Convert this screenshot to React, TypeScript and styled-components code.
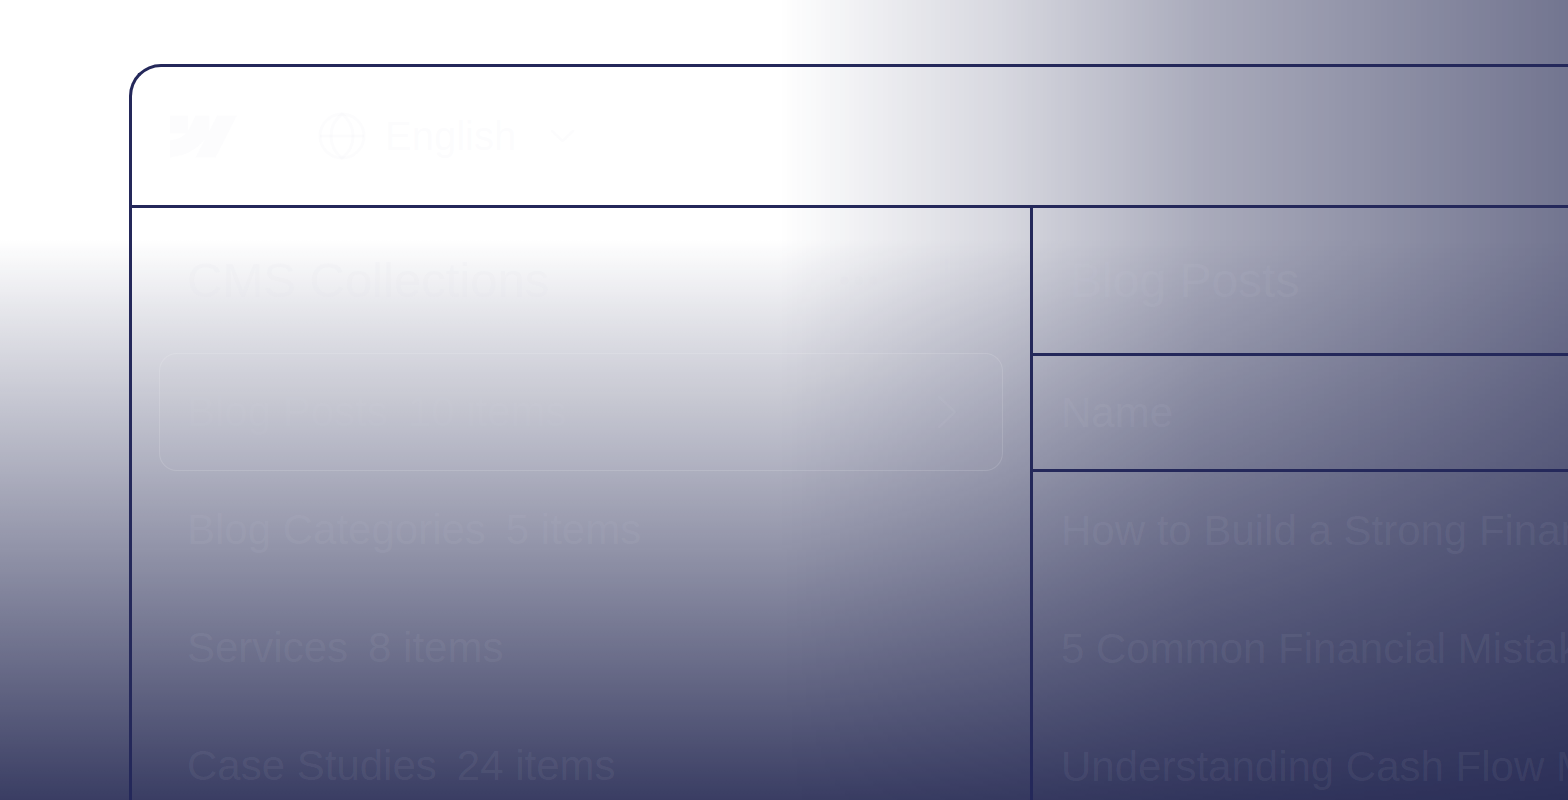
import React from "react";
import styled, { createGlobalStyle } from "styled-components";

const navy = "#24285a";
const ghost = "rgba(214, 216, 232, 0.075)";
const ghostLine = "rgba(255, 255, 255, 0.12)";

const GlobalStyle = createGlobalStyle`
  html, body {
    margin: 0;
    padding: 0;
    background: #242852;
    font-family: "Liberation Sans", Arial, "Noto Sans", sans-serif;
  }
  * { box-sizing: border-box; }
`;

const Page = styled.div`
  position: relative;
  width: 100%;
  height: 100vh;
  overflow: hidden;
  padding: 64px 0 0 129px;
  background: #242852;
`;

/* white glow fading to the right and to the bottom */
const Glow = styled.div`
  position: absolute;
  inset: 0;
  pointer-events: none;
  background: linear-gradient(
    to bottom,
    rgba(255, 255, 255, 1) 240px,
    rgba(255, 255, 255, 0.74) 400px,
    rgba(255, 255, 255, 0.42) 600px,
    rgba(255, 255, 255, 0.1) 800px
  );
  -webkit-mask-image: linear-gradient(
    to right,
    #000 780px,
    rgba(0, 0, 0, 0.82) 1000px,
    rgba(0, 0, 0, 0.61) 1200px,
    rgba(0, 0, 0, 0.36) 1568px
  );
  mask-image: linear-gradient(
    to right,
    #000 780px,
    rgba(0, 0, 0, 0.82) 1000px,
    rgba(0, 0, 0, 0.61) 1200px,
    rgba(0, 0, 0, 0.36) 1568px
  );
`;

const Frame = styled.div`
  position: relative;
  width: 1700px;
  border-top: 3px solid ${navy};
  border-left: 3px solid ${navy};
  border-top-left-radius: 32px;
  display: flex;
  flex-direction: column;
  color: ${ghost};
`;

const TopBar = styled.header`
  height: 141px;
  flex-shrink: 0;
  border-bottom: 3px solid ${navy};
  display: flex;
  align-items: center;
  padding-left: 38px;
`;

const LangSwitch = styled.div`
  display: flex;
  align-items: center;
  margin-left: 81px;
  font-size: 40px;
  line-height: 1;
`;

const LangLabel = styled.span`
  margin-left: 19px;
  margin-right: 34px;
`;

const Body = styled.div`
  display: flex;
`;

const Sidebar = styled.aside`
  width: 901px;
  flex-shrink: 0;
  border-right: 3px solid ${navy};
  padding: 0 27px 40px;
  display: flex;
  flex-direction: column;
`;

const SidebarHead = styled.div`
  height: 145px;
  flex-shrink: 0;
  display: flex;
  align-items: center;
  justify-content: space-between;
  padding: 0 34px 0 28px;
`;

const SidebarTitle = styled.h2`
  margin: 0;
  font-size: 49px;
  font-weight: 400;
  line-height: 1;
`;

const HeadActions = styled.div`
  display: flex;
  align-items: center;
  gap: 46px;
`;

const CollectionItem = styled.div<{ $active?: boolean }>`
  height: 118px;
  flex-shrink: 0;
  display: flex;
  align-items: center;
  justify-content: space-between;
  padding: 0 45px 0 27px;
  border: 1.5px solid ${(p) => (p.$active ? ghostLine : "transparent")};
  border-radius: 18px;
  background: ${(p) => (p.$active ? "rgba(255,255,255,0.02)" : "transparent")};
  font-size: 42px;
  line-height: 1;
`;

const ItemText = styled.div`
  display: flex;
  gap: 20px;
  white-space: nowrap;
`;

const Main = styled.section`
  flex: 1;
  display: flex;
  flex-direction: column;
`;

const MainTitle = styled.div`
  height: 148px;
  flex-shrink: 0;
  border-bottom: 3px solid ${navy};
  display: flex;
  align-items: center;
  padding-left: 37px;
  font-size: 48px;
  line-height: 1;
`;

const ColumnHead = styled.div`
  height: 116px;
  flex-shrink: 0;
  border-bottom: 3px solid ${navy};
  display: flex;
  align-items: center;
  padding-left: 28px;
  font-size: 42px;
  line-height: 1;
`;

const Row = styled.div`
  height: 118px;
  flex-shrink: 0;
  display: flex;
  align-items: center;
  padding-left: 28px;
  font-size: 42px;
  line-height: 1;
  white-space: nowrap;
`;

const WebflowMark = () => (
  <svg width="67" height="43" viewBox="0 0 1080 674" fill="currentColor">
    <path d="M1080 0L735.4 673.7H411.7L555.9 394.5H549.4C430.5 548.9 252.9 650.6 0 673.7V398.3C0 398.3 161.8 388.8 256.9 288.8H0V0H288.8V237.5L295.3 237.5L413.3 0H631.6V236L638.1 236L760.6 0H1080Z" />
  </svg>
);

const GlobeIcon = () => (
  <svg width="48" height="48" viewBox="0 0 48 48" fill="none" stroke="currentColor" strokeWidth="3">
    <circle cx="24" cy="24" r="22" />
    <path d="M2 24h44" />
    <path d="M24 2c-8 6-11 14-11 22s3 16 11 22c8-6 11-14 11-22S32 8 24 2z" />
  </svg>
);

const ChevronDown = () => (
  <svg width="25" height="14" viewBox="0 0 25 14" fill="none" stroke="currentColor" strokeWidth="2.5" strokeLinecap="round" strokeLinejoin="round">
    <path d="M2 2l10.5 10L23 2" />
  </svg>
);

const DotsIcon = () => (
  <svg width="38" height="9" viewBox="0 0 38 9" fill="currentColor">
    <circle cx="4.5" cy="4.5" r="4" />
    <circle cx="19" cy="4.5" r="4" />
    <circle cx="33.5" cy="4.5" r="4" />
  </svg>
);

const PlusIcon = () => (
  <svg width="45" height="45" viewBox="0 0 45 45" fill="none" stroke="currentColor" strokeWidth="3">
    <path d="M22.5 1v43M1 22.5h43" />
  </svg>
);

const ChevronRight = () => (
  <svg width="20" height="34" viewBox="0 0 20 34" fill="none" stroke="currentColor" strokeWidth="2.5" strokeLinecap="round" strokeLinejoin="round">
    <path d="M2 2l16 15L2 32" />
  </svg>
);

const collections = [
  { name: "Blog Posts", count: 10 },
  { name: "Blog Categories", count: 5 },
  { name: "Services", count: 8 },
  { name: "Case Studies", count: 24 },
];

const posts = [
  "How to Build a Strong Financial Foundation",
  "5 Common Financial Mistakes to Avoid",
  "Understanding Cash Flow Management",
];

export default function App() {
  return (
    <>
      <GlobalStyle />
      <Page>
        <Glow />
        <Frame>
          <TopBar>
            <WebflowMark />
            <LangSwitch>
              <GlobeIcon />
              <LangLabel>English</LangLabel>
              <ChevronDown />
            </LangSwitch>
          </TopBar>
          <Body>
            <Sidebar>
              <SidebarHead>
                <SidebarTitle>CMS Collections</SidebarTitle>
                <HeadActions>
                  <DotsIcon />
                  <PlusIcon />
                </HeadActions>
              </SidebarHead>
              {collections.map((c, i) => (
                <CollectionItem key={c.name} $active={i === 0}>
                  <ItemText>
                    <span>{c.name}</span>
                    <span>{c.count} items</span>
                  </ItemText>
                  {i === 0 && <ChevronRight />}
                </CollectionItem>
              ))}
            </Sidebar>
            <Main>
              <MainTitle>Blog Posts</MainTitle>
              <ColumnHead>Name</ColumnHead>
              {posts.map((p) => (
                <Row key={p}>{p}</Row>
              ))}
            </Main>
          </Body>
        </Frame>
      </Page>
    </>
  );
}
